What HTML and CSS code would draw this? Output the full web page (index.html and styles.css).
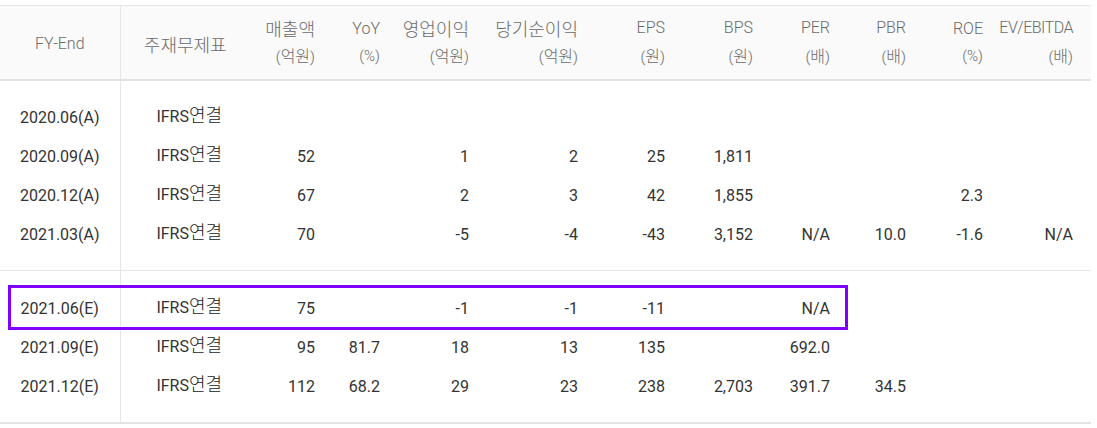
FILE: index.html
```html
<!DOCTYPE html>
<html lang="ko">
<head>
<meta charset="utf-8">
<link rel="stylesheet" href="styles.css">
</head>
<body>
<div class="wrap">
<table class="fin">
  <colgroup>
    <col class="c-fy"><col class="c-ty"><col class="c-sales"><col class="c-yoy"><col class="c-op"><col class="c-net"><col class="c-eps"><col class="c-bps"><col class="c-per"><col class="c-pbr"><col class="c-roe"><col class="c-ev">
  </colgroup>
  <thead>
    <tr>
      <th class="ctr div">FY-End</th>
      <th class="ctr"><span class="k">주재무제표</span></th>
      <th><span class="t k">매출액</span><span class="s">(<span class="ks">억원</span>)</span></th>
      <th><span class="t">YoY</span><span class="s">(%)</span></th>
      <th><span class="t k">영업이익</span><span class="s">(<span class="ks">억원</span>)</span></th>
      <th><span class="t k">당기순이익</span><span class="s">(<span class="ks">억원</span>)</span></th>
      <th><span class="t">EPS</span><span class="s">(<span class="ks">원</span>)</span></th>
      <th><span class="t">BPS</span><span class="s">(<span class="ks">원</span>)</span></th>
      <th><span class="t">PER</span><span class="s">(<span class="ks">배</span>)</span></th>
      <th><span class="t">PBR</span><span class="s">(<span class="ks">배</span>)</span></th>
      <th><span class="t">ROE</span><span class="s">(%)</span></th>
      <th class="last"><span class="t narrow">EV/EBITDA</span><span class="s">(<span class="ks">배</span>)</span></th>
    </tr>
  </thead>
  <tbody class="grp">
    <tr class="sp-top"><td class="div"></td><td colspan="11"></td></tr>
    <tr><td class="ctr div">2020.06(A)</td><td class="ctr ty">IFRS<span class="kd">연결</span></td><td></td><td></td><td></td><td></td><td></td><td></td><td></td><td></td><td></td><td class="last"></td></tr>
    <tr><td class="ctr div">2020.09(A)</td><td class="ctr ty">IFRS<span class="kd">연결</span></td><td>52</td><td></td><td>1</td><td>2</td><td>25</td><td>1,811</td><td></td><td></td><td></td><td class="last"></td></tr>
    <tr><td class="ctr div">2020.12(A)</td><td class="ctr ty">IFRS<span class="kd">연결</span></td><td>67</td><td></td><td>2</td><td>3</td><td>42</td><td>1,855</td><td></td><td></td><td>2.3</td><td class="last"></td></tr>
    <tr><td class="ctr div">2021.03(A)</td><td class="ctr ty">IFRS<span class="kd">연결</span></td><td>70</td><td></td><td>-5</td><td>-4</td><td>-43</td><td>3,152</td><td>N/A</td><td>10.0</td><td>-1.6</td><td class="last">N/A</td></tr>
    <tr class="sp-bot"><td class="div"></td><td colspan="11"></td></tr>
  </tbody>
  <tbody class="grp est">
    <tr class="sp-top2"><td class="div"></td><td colspan="11"></td></tr>
    <tr><td class="ctr div">2021.06(E)</td><td class="ctr ty">IFRS<span class="kd">연결</span></td><td>75</td><td></td><td>-1</td><td>-1</td><td>-11</td><td></td><td>N/A</td><td></td><td></td><td class="last"></td></tr>
    <tr><td class="ctr div">2021.09(E)</td><td class="ctr ty">IFRS<span class="kd">연결</span></td><td>95</td><td>81.7</td><td>18</td><td>13</td><td>135</td><td></td><td>692.0</td><td></td><td></td><td class="last"></td></tr>
    <tr><td class="ctr div">2021.12(E)</td><td class="ctr ty">IFRS<span class="kd">연결</span></td><td>112</td><td>68.2</td><td>29</td><td>23</td><td>238</td><td>2,703</td><td>391.7</td><td>34.5</td><td></td><td class="last"></td></tr>
    <tr class="sp-bot"><td class="div"></td><td colspan="11"></td></tr>
  </tbody>
</table>
<div class="highlight"></div>
</div>
</body>
</html>
```
FILE: styles.css
```css
html, body {
  margin: 0;
  padding: 0;
  background: #fff;
}
body {
  font-family: Roboto, "Noto Sans CJK KR", sans-serif;
  color: #333;
}
.wrap {
  position: relative;
  padding-top: 5px;
  width: 1091px;
}
.fin {
  width: 1091px;
  border-collapse: collapse;
  table-layout: fixed;
}
.c-fy { width: 120px; }
.c-ty { width: 130px; }
.c-sales { width: 73px; }
.c-yoy { width: 65px; }
.c-op { width: 89px; }
.c-net { width: 109px; }
.c-eps { width: 87px; }
.c-bps { width: 88px; }
.c-per { width: 77px; }
.c-pbr { width: 76px; }
.c-roe { width: 77px; }
.c-ev { width: 100px; }

.fin th, .fin td {
  padding: 0 8px 0 0;
  text-align: right;
  white-space: nowrap;
}
.fin .last { padding-right: 18px; }
.fin .ctr { text-align: center; padding: 0; }
.fin .div { border-right: 1px solid #e6e6e6; }

.k, .ks, .kd {
  font-family: "Noto Sans CJK KR", sans-serif;
  font-weight: 300;
}
.fin thead th {
  background: #fafafa;
  border-top: 1px solid #e6e6e6;
  border-bottom: 2px solid #e3e3e3;
  height: 71px;
  font-weight: 300;
  color: #6a6a6a;
  font-size: 16px;
  vertical-align: middle;
}
.fin thead th .t {
  display: block;
  line-height: 26px;
  font-size: 16px;
}
.fin thead th .narrow { letter-spacing: -0.5px; }
.fin thead th .k { font-size: 18px; }
.fin thead th .ks { font-size: 16px; }
.fin thead th .s {
  display: block;
  line-height: 26px;
  font-size: 15px;
  margin-top: 1px;
}
.fin thead th.ctr { padding-top: 2px; }

.fin tbody td {
  height: 39px;
  font-size: 16px;
  line-height: 20px;
  vertical-align: middle;
  color: #333;
}
.fin tbody td.ty {
  height: 35px;
  padding: 0 0 4px 8px;
}
.fin tbody td .kd {
  font-size: 18px;
  font-weight: 300;
  color: #222;
}
.fin tbody tr.sp-top td { height: 17px; }
.fin tbody tr.sp-top2 td { height: 18px; }
.fin tbody tr.sp-bot td { height: 16px; }
.fin tbody.est { border-top: 1px solid #e6e6e6; border-bottom: 2px solid #e3e3e3; }

.highlight {
  position: absolute;
  left: 8px;
  top: 285px;
  width: 840px;
  height: 45px;
  box-sizing: border-box;
  border: 3px solid #7f00ff;
  pointer-events: none;
}
```
